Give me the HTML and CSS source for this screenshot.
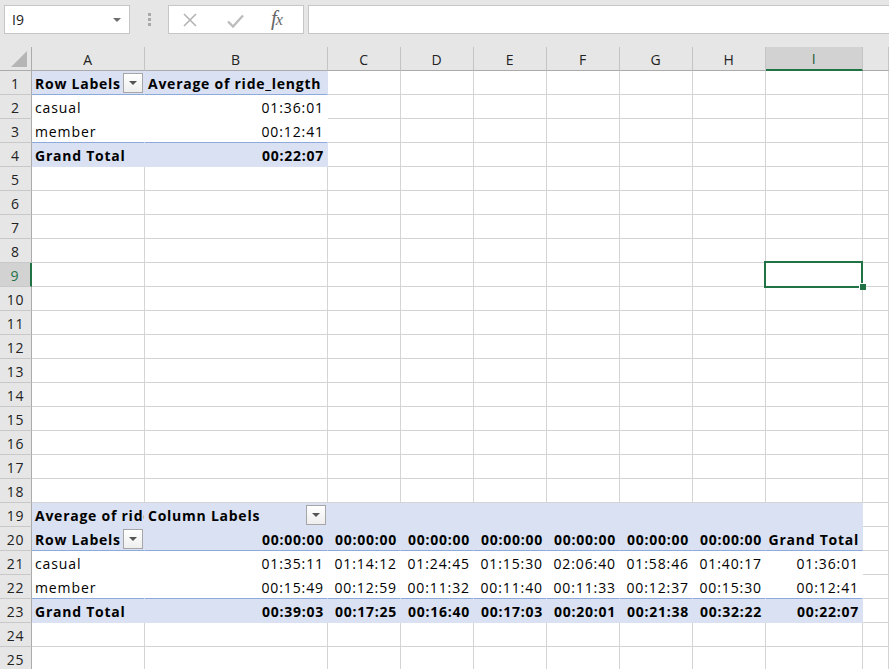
FILE: index.html
```html
<!DOCTYPE html>
<html>
<head>
<meta charset="utf-8">
<link rel="stylesheet" href="styles.css">
</head>
<body>
<div class="app">
  <div class="toolbar">
    <div class="namebox"><span>I9</span><span class="caret"></span></div>
    <div class="grip"><i></i><i></i><i></i></div>
    <div class="fxbox">
      <svg class="ico-x" width="14" height="14" viewBox="0 0 14 14"><path d="M1 1L13 13M13 1L1 13" stroke="#b4b4b4" stroke-width="1.6" fill="none"/></svg>
      <svg class="ico-ok" width="17" height="14" viewBox="0 0 17 14"><path d="M1 7.5L6 12.5L16 1.5" stroke="#bcbcbc" stroke-width="2.4" fill="none"/></svg>
      <span class="fx">f<span class="fxx">x</span></span>
    </div>
    <div class="formula"></div>
  </div>

  <div class="sheet">
    <div class="row hdr">
      <div class="corner"><svg width="16" height="16" viewBox="0 0 16 16"><path d="M16 0V16H0Z" fill="#b5b5b5"/></svg></div>
      <div class="ch">A</div><div class="ch">B</div><div class="ch">C</div><div class="ch">D</div><div class="ch">E</div><div class="ch">F</div><div class="ch">G</div><div class="ch">H</div><div class="ch sel">I</div><div class="ch"></div>
    </div>

    <div class="row">
      <div class="rh">1</div>
      <div class="c pb bl b dd-cell"><span>Row Labels</span><span class="dd"><i></i></span></div>
      <div class="c pb bl b">Average of ride_length</div>
      <div class="c"></div><div class="c"></div><div class="c"></div><div class="c"></div><div class="c"></div><div class="c"></div><div class="c"></div><div class="c"></div>
    </div>
    <div class="row">
      <div class="rh">2</div>
      <div class="c pw">casual</div>
      <div class="c pw r">01:36:01</div>
      <div class="c"></div><div class="c"></div><div class="c"></div><div class="c"></div><div class="c"></div><div class="c"></div><div class="c"></div><div class="c"></div>
    </div>
    <div class="row">
      <div class="rh">3</div>
      <div class="c pw bl">member</div>
      <div class="c pw bl r">00:12:41</div>
      <div class="c"></div><div class="c"></div><div class="c"></div><div class="c"></div><div class="c"></div><div class="c"></div><div class="c"></div><div class="c"></div>
    </div>
    <div class="row">
      <div class="rh">4</div>
      <div class="c pb b">Grand Total</div>
      <div class="c pb b r">00:22:07</div>
      <div class="c"></div><div class="c"></div><div class="c"></div><div class="c"></div><div class="c"></div><div class="c"></div><div class="c"></div><div class="c"></div>
    </div>
    <div class="row"><div class="rh">5</div><div class="c"></div><div class="c"></div><div class="c"></div><div class="c"></div><div class="c"></div><div class="c"></div><div class="c"></div><div class="c"></div><div class="c"></div><div class="c"></div></div>
    <div class="row"><div class="rh">6</div><div class="c"></div><div class="c"></div><div class="c"></div><div class="c"></div><div class="c"></div><div class="c"></div><div class="c"></div><div class="c"></div><div class="c"></div><div class="c"></div></div>
    <div class="row"><div class="rh">7</div><div class="c"></div><div class="c"></div><div class="c"></div><div class="c"></div><div class="c"></div><div class="c"></div><div class="c"></div><div class="c"></div><div class="c"></div><div class="c"></div></div>
    <div class="row"><div class="rh">8</div><div class="c"></div><div class="c"></div><div class="c"></div><div class="c"></div><div class="c"></div><div class="c"></div><div class="c"></div><div class="c"></div><div class="c"></div><div class="c"></div></div>
    <div class="row"><div class="rh sel">9</div><div class="c"></div><div class="c"></div><div class="c"></div><div class="c"></div><div class="c"></div><div class="c"></div><div class="c"></div><div class="c"></div><div class="c active"><span class="selbox"></span><span class="handle"></span></div><div class="c"></div></div>
    <div class="row"><div class="rh">10</div><div class="c"></div><div class="c"></div><div class="c"></div><div class="c"></div><div class="c"></div><div class="c"></div><div class="c"></div><div class="c"></div><div class="c"></div><div class="c"></div></div>
    <div class="row"><div class="rh">11</div><div class="c"></div><div class="c"></div><div class="c"></div><div class="c"></div><div class="c"></div><div class="c"></div><div class="c"></div><div class="c"></div><div class="c"></div><div class="c"></div></div>
    <div class="row"><div class="rh">12</div><div class="c"></div><div class="c"></div><div class="c"></div><div class="c"></div><div class="c"></div><div class="c"></div><div class="c"></div><div class="c"></div><div class="c"></div><div class="c"></div></div>
    <div class="row"><div class="rh">13</div><div class="c"></div><div class="c"></div><div class="c"></div><div class="c"></div><div class="c"></div><div class="c"></div><div class="c"></div><div class="c"></div><div class="c"></div><div class="c"></div></div>
    <div class="row"><div class="rh">14</div><div class="c"></div><div class="c"></div><div class="c"></div><div class="c"></div><div class="c"></div><div class="c"></div><div class="c"></div><div class="c"></div><div class="c"></div><div class="c"></div></div>
    <div class="row"><div class="rh">15</div><div class="c"></div><div class="c"></div><div class="c"></div><div class="c"></div><div class="c"></div><div class="c"></div><div class="c"></div><div class="c"></div><div class="c"></div><div class="c"></div></div>
    <div class="row"><div class="rh">16</div><div class="c"></div><div class="c"></div><div class="c"></div><div class="c"></div><div class="c"></div><div class="c"></div><div class="c"></div><div class="c"></div><div class="c"></div><div class="c"></div></div>
    <div class="row"><div class="rh">17</div><div class="c"></div><div class="c"></div><div class="c"></div><div class="c"></div><div class="c"></div><div class="c"></div><div class="c"></div><div class="c"></div><div class="c"></div><div class="c"></div></div>
    <div class="row"><div class="rh">18</div><div class="c"></div><div class="c"></div><div class="c"></div><div class="c"></div><div class="c"></div><div class="c"></div><div class="c"></div><div class="c"></div><div class="c"></div><div class="c"></div></div>

    <div class="row">
      <div class="rh">19</div>
      <div class="c pb b"><span>Average of ride_length</span></div>
      <div class="c pb b dd-cell"><span>Column Labels</span><span class="dd"><i></i></span></div>
      <div class="c pb"></div><div class="c pb"></div><div class="c pb"></div><div class="c pb"></div><div class="c pb"></div><div class="c pb"></div><div class="c pb"></div>
      <div class="c"></div>
    </div>
    <div class="row">
      <div class="rh">20</div>
      <div class="c pb bl b dd-cell"><span>Row Labels</span><span class="dd"><i></i></span></div>
      <div class="c pb bl b r">00:00:00</div>
      <div class="c pb bl b r">00:00:00</div>
      <div class="c pb bl b r">00:00:00</div>
      <div class="c pb bl b r">00:00:00</div>
      <div class="c pb bl b r">00:00:00</div>
      <div class="c pb bl b r">00:00:00</div>
      <div class="c pb bl b r">00:00:00</div>
      <div class="c pb bl b r">Grand Total</div>
      <div class="c"></div>
    </div>
    <div class="row">
      <div class="rh">21</div>
      <div class="c pw">casual</div>
      <div class="c pw r">01:35:11</div>
      <div class="c pw r">01:14:12</div>
      <div class="c pw r">01:24:45</div>
      <div class="c pw r">01:15:30</div>
      <div class="c pw r">02:06:40</div>
      <div class="c pw r">01:58:46</div>
      <div class="c pw r">01:40:17</div>
      <div class="c pw r">01:36:01</div>
      <div class="c"></div>
    </div>
    <div class="row">
      <div class="rh">22</div>
      <div class="c pw bl">member</div>
      <div class="c pw bl r">00:15:49</div>
      <div class="c pw bl r">00:12:59</div>
      <div class="c pw bl r">00:11:32</div>
      <div class="c pw bl r">00:11:40</div>
      <div class="c pw bl r">00:11:33</div>
      <div class="c pw bl r">00:12:37</div>
      <div class="c pw bl r">00:15:30</div>
      <div class="c pw bl r">00:12:41</div>
      <div class="c"></div>
    </div>
    <div class="row">
      <div class="rh">23</div>
      <div class="c pb b">Grand Total</div>
      <div class="c pb b r">00:39:03</div>
      <div class="c pb b r">00:17:25</div>
      <div class="c pb b r">00:16:40</div>
      <div class="c pb b r">00:17:03</div>
      <div class="c pb b r">00:20:01</div>
      <div class="c pb b r">00:21:38</div>
      <div class="c pb b r">00:32:22</div>
      <div class="c pb b r">00:22:07</div>
      <div class="c"></div>
    </div>
    <div class="row"><div class="rh">24</div><div class="c"></div><div class="c"></div><div class="c"></div><div class="c"></div><div class="c"></div><div class="c"></div><div class="c"></div><div class="c"></div><div class="c"></div><div class="c"></div></div>
    <div class="row"><div class="rh">25</div><div class="c"></div><div class="c"></div><div class="c"></div><div class="c"></div><div class="c"></div><div class="c"></div><div class="c"></div><div class="c"></div><div class="c"></div><div class="c"></div></div>
  </div>
</div>
</body>
</html>
```

FILE: styles.css
```css
html, body {
  margin: 0;
  padding: 0;
  background: #e6e6e6;
}
body {
  font-family: "Open Sans", "Noto Sans", sans-serif;
  font-size: 14px;
  color: #000;
}
.app {
  width: 889px;
  height: 669px;
  overflow: hidden;
}

/* ---------- formula bar ---------- */
.toolbar {
  height: 47px;
  box-sizing: border-box;
  padding: 5px 0 0 4px;
  display: flex;
  align-items: flex-start;
}
.namebox {
  width: 126px;
  height: 29px;
  box-sizing: border-box;
  border: 1px solid #c6c6c6;
  background: #fff;
  display: flex;
  align-items: center;
  justify-content: space-between;
  padding: 0 8px 0 7px;
  font-size: 14px;
  color: #222;
}
.caret {
  width: 0;
  height: 0;
  border-left: 4px solid transparent;
  border-right: 4px solid transparent;
  border-top: 4px solid #6e6e6e;
}
.grip {
  width: 38px;
  height: 29px;
  display: flex;
  flex-direction: column;
  align-items: center;
  justify-content: center;
  gap: 2px;
}
.grip i {
  display: block;
  width: 3px;
  height: 3px;
  background: #a9a9a9;
}
.fxbox {
  width: 136px;
  height: 29px;
  box-sizing: border-box;
  border: 1px solid #c6c6c6;
  background: #fff;
  display: flex;
  align-items: center;
  padding-left: 14px;
}
.ico-x { margin-top: 1px; }
.ico-ok { margin-left: 30px; margin-top: 2px; }
.fx {
  margin-left: 27px;
  font-family: "Liberation Serif", "DejaVu Serif", serif;
  font-style: italic;
  font-size: 21px;
  color: #666;
  letter-spacing: -1px;
  margin-top: -2px;
}
.fxx { font-size: 16px; }
.formula {
  flex: 1;
  margin-left: 4px;
  height: 29px;
  box-sizing: border-box;
  border: 1px solid #c6c6c6;
  border-right: none;
  background: #fff;
}

/* ---------- grid ---------- */
.sheet { background: #fff; }
.row {
  display: grid;
  grid-template-columns: 32px 113px 183px 73px 73px 73px 73px 73px 73px 97px 1fr;
  height: 24px;
}
.row > div {
  box-sizing: border-box;
  height: 24px;
  min-width: 0;
}
.hdr { background: #e6e6e6; }
.corner {
  border-right: 1px solid #ababab;
  border-bottom: 1px solid #ababab;
  display: flex;
  align-items: flex-end;
  justify-content: flex-end;
  padding: 0 4px 3px 0;
}
.ch {
  border-right: 1px solid #c4c4c4;
  border-bottom: 1px solid #ababab;
  display: flex;
  align-items: center;
  justify-content: center;
  color: #222;
  letter-spacing: 0.8px;
  padding-top: 1px;
}
.ch.sel {
  background: #d2d2d2;
  border-bottom: 2px solid #217346;
  color: #1c5a37;
}
.rh {
  background: #e6e6e6;
  border-right: 1px solid #ababab;
  border-bottom: 1px solid #c8c8c8;
  display: flex;
  align-items: center;
  justify-content: center;
  color: #222;
  letter-spacing: 0.8px;
  padding-top: 1px;
}
.rh.sel {
  background: #d2d2d2;
  color: #217346;
  border-right: 2px solid #217346;
}
.c {
  border-right: 1px solid #d4d4d4;
  border-bottom: 1px solid #d4d4d4;
  display: flex;
  align-items: center;
  padding: 1px 3px 0;
  white-space: nowrap;
  overflow: hidden;
  letter-spacing: 0.9px;
}
.r { justify-content: flex-end; padding-right: 3px; }
.b { font-weight: 700; letter-spacing: 0.75px; }

/* pivot styling */
.pb {
  background: #d9e1f2;
  border-right-color: #d9e1f2;
  border-bottom-color: #d9e1f2;
}
.pw {
  background: #fff;
  border-right-color: #fff;
  border-bottom-color: #fff;
}
.bl { border-bottom-color: #8ea9db; }

.dd-cell { padding-right: 1px; }
.dd {
  margin-left: auto;
  flex: 0 0 auto;
  width: 20px;
  height: 20px;
  margin-top: -1px;
  box-sizing: border-box;
  border: 1px solid #a6a6a6;
  background: linear-gradient(#ffffff, #eeeeee);
  display: flex;
  align-items: center;
  justify-content: center;
}
.dd i {
  display: block;
  width: 0;
  height: 0;
  border-left: 4px solid transparent;
  border-right: 4px solid transparent;
  border-top: 4px solid #555;
}

/* active cell */
.active {
  position: relative;
  overflow: visible;
}
.selbox {
  position: absolute;
  left: -2px;
  top: -2px;
  width: 99px;
  height: 27px;
  box-sizing: border-box;
  border: 2px solid #217346;
}
.handle {
  position: absolute;
  right: -4px;
  bottom: -4px;
  width: 6px;
  height: 6px;
  background: #217346;
  border-left: 1px solid #fff;
  border-top: 1px solid #fff;
}
```
